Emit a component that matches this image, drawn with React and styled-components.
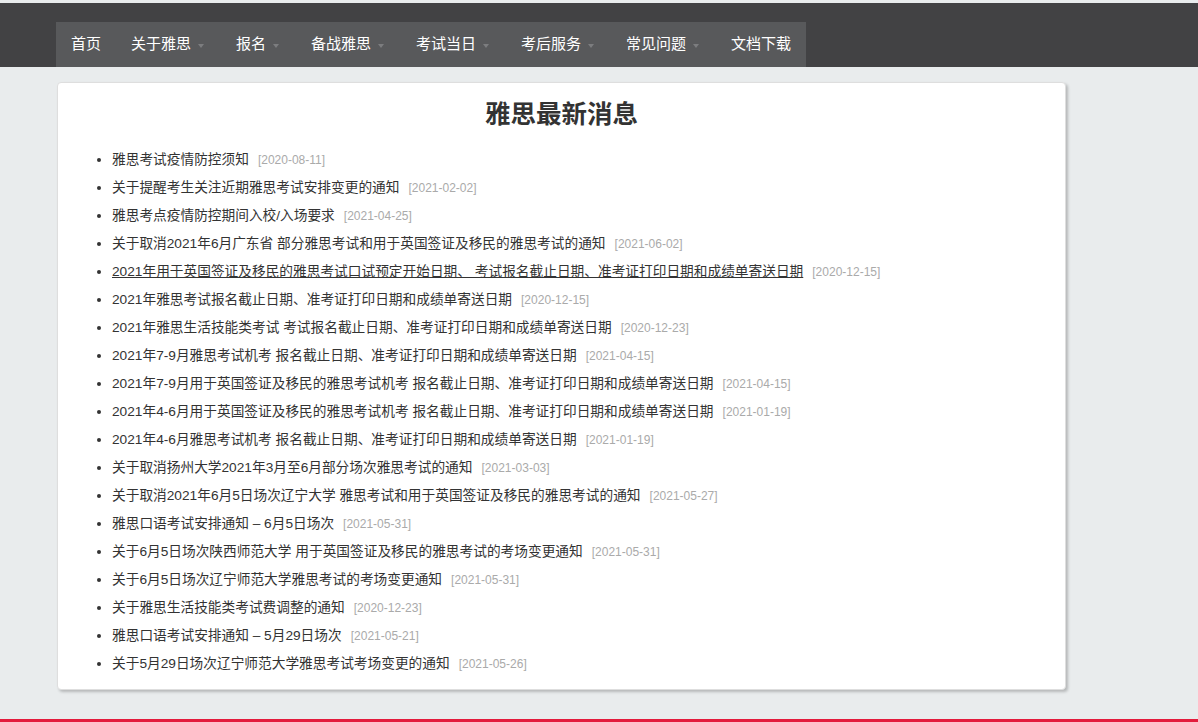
import React from "react";
import styled, { createGlobalStyle } from "styled-components";

const GlobalStyle = createGlobalStyle`
  html, body {
    margin: 0;
    padding: 0;
    background: #e9eced;
    font-family: "Liberation Sans", "Noto Sans CJK SC", sans-serif;
  }
  * {
    box-sizing: border-box;
  }
`;

const menu = [
  { label: "首页" },
  { label: "关于雅思", drop: true },
  { label: "报名", drop: true },
  { label: "备战雅思", drop: true },
  { label: "考试当日", drop: true },
  { label: "考后服务", drop: true },
  { label: "常见问题", drop: true },
  { label: "文档下载" },
];

const news = [
  { title: "雅思考试疫情防控须知", date: "2020-08-11" },
  { title: "关于提醒考生关注近期雅思考试安排变更的通知", date: "2021-02-02" },
  { title: "雅思考点疫情防控期间入校/入场要求", date: "2021-04-25" },
  { title: "关于取消2021年6月广东省 部分雅思考试和用于英国签证及移民的雅思考试的通知", date: "2021-06-02" },
  {
    title: "2021年用于英国签证及移民的雅思考试口试预定开始日期、 考试报名截止日期、准考证打印日期和成绩单寄送日期",
    date: "2020-12-15",
    hover: true,
  },
  { title: "2021年雅思考试报名截止日期、准考证打印日期和成绩单寄送日期", date: "2020-12-15" },
  { title: "2021年雅思生活技能类考试 考试报名截止日期、准考证打印日期和成绩单寄送日期", date: "2020-12-23" },
  { title: "2021年7-9月雅思考试机考 报名截止日期、准考证打印日期和成绩单寄送日期", date: "2021-04-15" },
  { title: "2021年7-9月用于英国签证及移民的雅思考试机考 报名截止日期、准考证打印日期和成绩单寄送日期", date: "2021-04-15" },
  { title: "2021年4-6月用于英国签证及移民的雅思考试机考 报名截止日期、准考证打印日期和成绩单寄送日期", date: "2021-01-19" },
  { title: "2021年4-6月雅思考试机考 报名截止日期、准考证打印日期和成绩单寄送日期", date: "2021-01-19" },
  { title: "关于取消扬州大学2021年3月至6月部分场次雅思考试的通知", date: "2021-03-03" },
  { title: "关于取消2021年6月5日场次辽宁大学 雅思考试和用于英国签证及移民的雅思考试的通知", date: "2021-05-27" },
  { title: "雅思口语考试安排通知 – 6月5日场次", date: "2021-05-31" },
  { title: "关于6月5日场次陕西师范大学 用于英国签证及移民的雅思考试的考场变更通知", date: "2021-05-31" },
  { title: "关于6月5日场次辽宁师范大学雅思考试的考场变更通知", date: "2021-05-31" },
  { title: "关于雅思生活技能类考试费调整的通知", date: "2020-12-23" },
  { title: "雅思口语考试安排通知 – 5月29日场次", date: "2021-05-21" },
  { title: "关于5月29日场次辽宁师范大学雅思考试考场变更的通知", date: "2021-05-26" },
];

const App = () => {
  return (
    <Page>
      <GlobalStyle />
      <Header>
        <Nav>
          {menu.map((item) => (
            <NavItem key={item.label}>
              {item.label}
              {item.drop && <Caret />}
            </NavItem>
          ))}
        </Nav>
      </Header>

      <Card>
        <Title>雅思最新消息</Title>
        <NewsList>
          {news.map((item) => (
            <NewsItem key={item.title}>
              <NewsLink $hover={item.hover}>{item.title}</NewsLink>
              <NewsDate>[{item.date}]</NewsDate>
            </NewsItem>
          ))}
        </NewsList>
      </Card>

      <Footer />
    </Page>
  );
};

const Page = styled.div`
  padding-top: 3px;
  min-height: 722px;
  display: flex;
  flex-direction: column;
`;

const Header = styled.div`
  background-color: #424244;
  height: 64px;
  padding: 19px 0 0 56px;
`;

const Nav = styled.ul`
  display: flex;
  width: 750px;
  height: 45px;
  margin: 0;
  padding: 0;
  list-style: none;
  background-color: #58595b;
`;

const NavItem = styled.li`
  padding: 0 15px;
  line-height: 44px;
  color: #fff;
  font-size: 15px;
  white-space: nowrap;
  cursor: pointer;
`;

const Caret = styled.span`
  display: inline-block;
  width: 0;
  height: 0;
  margin: 0 2px 1px 7px;
  border-left: 3.5px solid transparent;
  border-right: 3.5px solid transparent;
  border-top: 4px solid #7c7d7f;
`;

const Card = styled.div`
  width: 1009px;
  margin: 15px 0 0 57px;
  padding: 14px 0 11px;
  background-color: #fff;
  border: 1px solid #dedede;
  border-radius: 4px;
  box-shadow: 2px 2px 3px rgba(0, 0, 0, 0.22);
`;

const Title = styled.h2`
  margin: 0;
  text-align: center;
  font-size: 25.5px;
  line-height: 34px;
  font-weight: bold;
  color: #333;
`;

const NewsList = styled.ul`
  margin: 15px 0 0;
  padding-left: 54px;
  list-style: disc;
  color: #333;
`;

const NewsItem = styled.li`
  line-height: 28px;
  font-size: 13.7px;
`;

const NewsLink = styled.a`
  color: #333;
  text-decoration: ${(p) => (p.$hover ? "underline" : "none")};
  cursor: pointer;
`;

const NewsDate = styled.span`
  margin-left: 9px;
  font-size: 12px;
  color: #aaa;
`;

const Footer = styled.div`
  margin-top: auto;
  height: 3px;
  background-color: #e31b3c;
`;

export default App;
